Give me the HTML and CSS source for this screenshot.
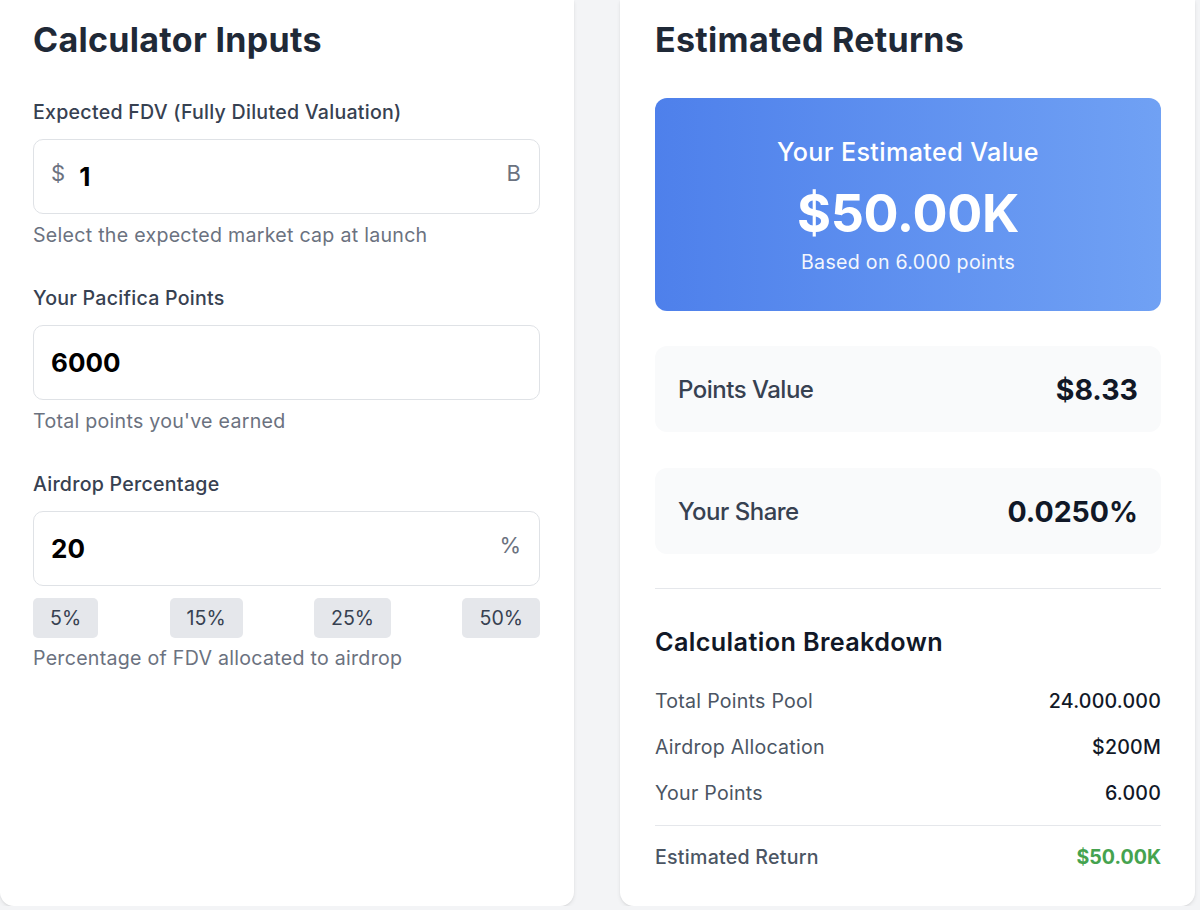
FILE: index.html
```html
<!DOCTYPE html>
<html lang="en">
<head>
<meta charset="utf-8">
<title>Pacifica Airdrop Calculator</title>
<link rel="stylesheet" href="styles.css">
</head>
<body>
<div class="page">
  <section class="card card-left">
    <h2 class="card-title">Calculator Inputs</h2>

    <div class="field">
      <label class="field-label">Expected FDV (Fully Diluted Valuation)</label>
      <div class="input-box">
        <span class="adorn">$</span>
        <input class="input input-prefixed" type="text" value="1">
        <span class="adorn">B</span>
      </div>
      <p class="hint">Select the expected market cap at launch</p>
    </div>

    <div class="field">
      <label class="field-label">Your Pacifica Points</label>
      <div class="input-box">
        <input class="input" type="text" value="6000">
      </div>
      <p class="hint">Total points you've earned</p>
    </div>

    <div class="field">
      <label class="field-label">Airdrop Percentage</label>
      <div class="input-box">
        <input class="input" type="text" value="20">
        <span class="adorn">%</span>
      </div>
      <div class="presets">
        <button class="preset">5%</button>
        <button class="preset">15%</button>
        <button class="preset">25%</button>
        <button class="preset">50%</button>
      </div>
      <p class="hint hint-tight">Percentage of FDV allocated to airdrop</p>
    </div>
  </section>

  <section class="card card-right">
    <h2 class="card-title">Estimated Returns</h2>

    <div class="hero">
      <div class="hero-title">Your Estimated Value</div>
      <div class="hero-value">$50.00K</div>
      <div class="hero-sub">Based on 6.000 points</div>
    </div>

    <div class="stat">
      <span class="stat-label">Points Value</span>
      <span class="stat-value">$8.33</span>
    </div>
    <div class="stat">
      <span class="stat-label">Your Share</span>
      <span class="stat-value">0.0250%</span>
    </div>

    <div class="breakdown">
      <h3 class="breakdown-title">Calculation Breakdown</h3>
      <div class="rows">
        <div class="row"><span class="row-label">Total Points Pool</span><span class="row-value">24.000.000</span></div>
        <div class="row"><span class="row-label">Airdrop Allocation</span><span class="row-value">$200M</span></div>
        <div class="row"><span class="row-label">Your Points</span><span class="row-value">6.000</span></div>
      </div>
      <div class="row total"><span class="row-label total-label">Estimated Return</span><span class="row-value total-value">$50.00K</span></div>
    </div>
  </section>
</div>
</body>
</html>
```

FILE: styles.css
```css
html, body {
  margin: 0;
  padding: 0;
}

body {
  background: #f3f4f6;
  font-family: Inter, "Noto Sans", "Liberation Sans", sans-serif;
  color: #1f2937;
}

.page {
  display: flex;
  align-items: stretch;
  gap: 46px;
}

.card {
  box-sizing: border-box;
  background: #ffffff;
  border-radius: 0 0 14px 14px;
  box-shadow: 0 2px 4px rgba(0, 0, 0, 0.07), 0 1px 2px rgba(0, 0, 0, 0.05);
}

.card-left {
  width: 574px;
  padding: 17px 34px 35px 33px;
}

.card-right {
  width: 575px;
  padding: 17px 34px 35px 35px;
}

.card-title {
  margin: 0 0 36px;
  font-size: 34px;
  line-height: 45px;
  font-weight: 700;
  letter-spacing: 0.3px;
  color: #1f2937;
}

.field + .field {
  margin-top: 35px;
}

.field-label {
  display: block;
  margin-bottom: 13px;
  font-size: 19.6px;
  line-height: 28px;
  font-weight: 500;
  letter-spacing: 0.25px;
  color: #374151;
}

.input-box {
  box-sizing: border-box;
  display: flex;
  align-items: center;
  height: 75px;
  padding: 0 18px 0 17px;
  border: 1px solid #dfe2e6;
  border-radius: 10px;
  background: #fff;
}

.input {
  flex: 1;
  min-width: 0;
  padding: 0;
  border: none;
  outline: none;
  background: transparent;
  font-family: inherit;
  font-size: 26px;
  font-weight: 700;
  color: #000;
}

.input-prefixed {
  margin-left: 14px;
}

.adorn {
  padding-bottom: 8px;
  font-size: 22px;
  color: #6b7280;
}

.hint {
  margin: 7px 0 0;
  font-size: 19.6px;
  line-height: 28px;
  letter-spacing: 0.27px;
  color: #6b7280;
}

.hint-tight {
  margin-top: 6px;
}

.presets {
  display: flex;
  justify-content: space-between;
  margin-top: 12px;
}

.preset {
  height: 40px;
  padding: 0 17px;
  border: none;
  border-radius: 5px;
  background: #e5e7eb;
  font-family: inherit;
  font-size: 19.6px;
  color: #374151;
}

.hero {
  padding: 35px;
  border-radius: 12px;
  background: linear-gradient(90deg, #4e80eb 0%, #70a1f4 100%);
  color: #fff;
  text-align: center;
}

.hero-title {
  margin-bottom: 12px;
  font-size: 25.2px;
  line-height: 39px;
  font-weight: 500;
  letter-spacing: 0.35px;
}

.hero-value {
  font-size: 52px;
  line-height: 60px;
  font-weight: 700;
  letter-spacing: -0.3px;
}

.hero-sub {
  margin-top: 4px;
  font-size: 19.6px;
  line-height: 28px;
  letter-spacing: 0.3px;
  opacity: 0.93;
}

.stat {
  box-sizing: border-box;
  display: flex;
  justify-content: space-between;
  align-items: center;
  height: 86px;
  margin-top: 35px;
  padding: 0 23px;
  border-radius: 12px;
  background: #f9fafb;
}

.stat + .stat {
  margin-top: 36px;
}

.stat-label {
  font-size: 24px;
  font-weight: 500;
  letter-spacing: -0.5px;
  color: #374151;
}

.stat-value {
  font-size: 28.5px;
  font-weight: 700;
  color: #111827;
}

.breakdown {
  margin-top: 34px;
  padding-top: 34px;
  border-top: 1px solid #e5e7eb;
}

.breakdown-title {
  margin: 0 0 25px;
  font-size: 25.2px;
  line-height: 39px;
  font-weight: 600;
  letter-spacing: 0.38px;
  color: #111827;
}

.rows {
  display: flex;
  flex-direction: column;
  gap: 18px;
}

.row {
  display: flex;
  justify-content: space-between;
  font-size: 19.6px;
  line-height: 28px;
}

.row-label {
  letter-spacing: 0.25px;
  color: #4b5563;
}

.row-value {
  font-weight: 500;
  letter-spacing: 0.2px;
  color: #111827;
}

.total {
  margin-top: 18px;
  padding-top: 17px;
  border-top: 1px solid #e5e7eb;
}

.total-label {
  font-weight: 500;
}

.total-value {
  font-weight: 700;
  letter-spacing: 0;
  color: #45a34f;
}
```
